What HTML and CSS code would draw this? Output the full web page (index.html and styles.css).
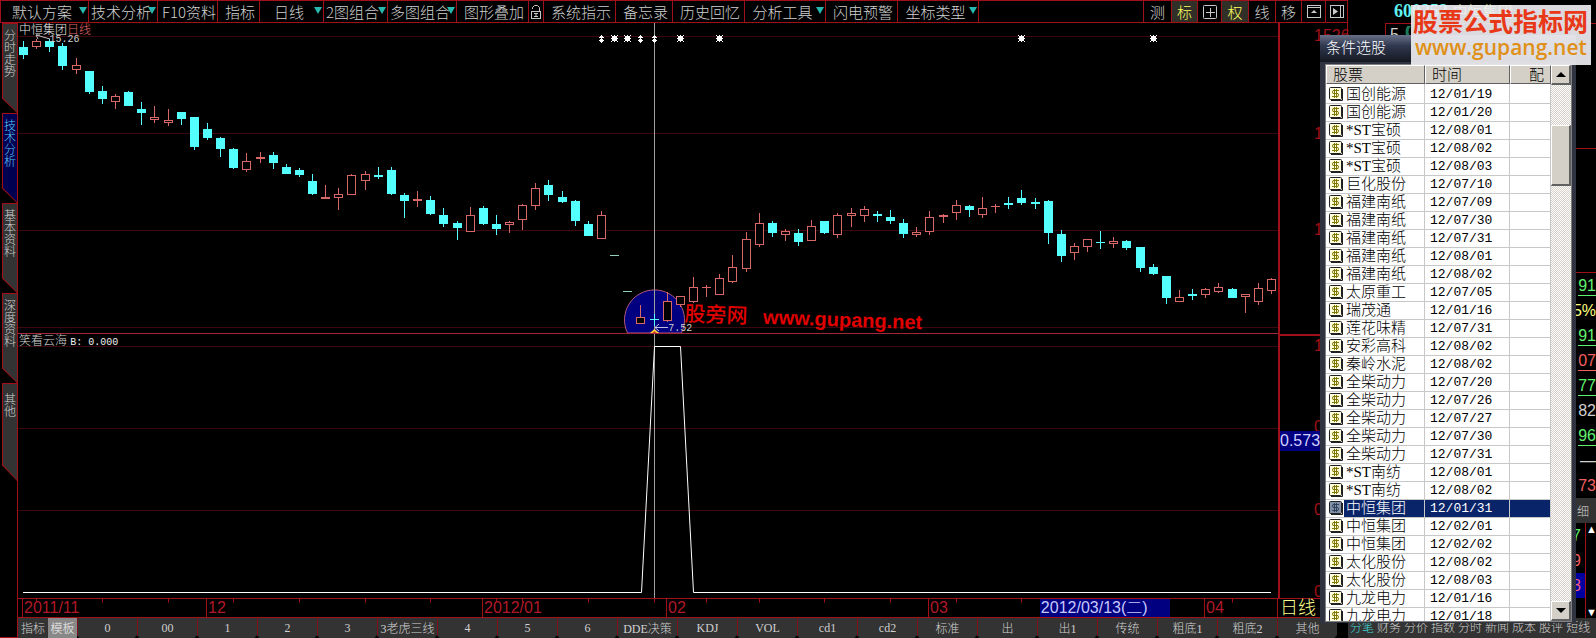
FILE: index.html
```html
<!DOCTYPE html>
<html lang="zh-CN">
<head>
    <meta charset="utf-8">
    <title>中恒集团 日线</title>
    <link rel="stylesheet" href="styles.css">
</head>
<body>
    <div class="main">
        <nav class="toolbar">
            <button class="tool drop">默认方案</button>
            <button class="tool drop tight">技术分析</button>
            <button class="tool">F10资料</button>
            <button class="tool">指标</button>
            <button class="tool drop">日线</button>
            <button class="tool drop tight">2图组合</button>
            <button class="tool drop tight">多图组合</button>
            <button class="tool">图形叠加</button>
            <button class="tool icon" aria-label="锁定">
                <svg width="12" height="16" viewBox="0 0 12 16" fill="none" stroke="#c8c8c8">
                    <path d="M2.5 5V3.5L4.5 1.5H7.5L9.5 3.5V7"/>
                    <rect x="1.5" y="7.5" width="9" height="7"/>
                    <path d="M4 9.5H8M4 12.5H8M6 9V13"/>
                </svg>
            </button>
            <button class="tool">系统指示</button>
            <button class="tool">备忘录</button>
            <button class="tool">历史回忆</button>
            <button class="tool drop">分析工具</button>
            <button class="tool">闪电预警</button>
            <button class="tool drop">坐标类型</button>
            <span class="tool"></span>
            <button class="tool icon">测</button>
            <button class="tool icon on">标</button>
            <button class="tool icon" aria-label="田字">
                <svg width="14" height="14" viewBox="0 0 14 14" fill="none" stroke="#c8c8c8">
                    <rect x="0.5" y="0.5" width="13" height="13" rx="1"/>
                    <path d="M3 7.5H12M7.5 3V12"/>
                </svg>
            </button>
            <button class="tool icon on">权</button>
            <button class="tool icon">线</button>
            <button class="tool icon">移</button>
            <button class="tool icon" aria-label="向上">
                <svg width="14" height="14" viewBox="0 0 14 14" fill="none" stroke="#c8c8c8">
                    <rect x="0.5" y="0.5" width="13" height="12"/>
                    <path d="M0 2.5H14"/>
                    <path d="M4 8L7 5L10 8Z" fill="#c8c8c8" stroke="none"/>
                </svg>
            </button>
            <button class="tool icon" aria-label="向右">
                <svg width="14" height="14" viewBox="0 0 14 14" fill="none" stroke="#c8c8c8">
                    <rect x="0.5" y="0.5" width="13" height="12"/>
                    <path d="M10.5 0V13"/>
                    <path d="M3 3L8 6.5L3 10Z" fill="#c8c8c8" stroke="none"/>
                </svg>
            </button>
        </nav>

        <div class="workspace">
            <nav class="side-tabs">
                <button class="side-tab"><span>分时走势</span></button>
                <button class="side-tab active"><span>技术分析</span></button>
                <button class="side-tab"><span>基本资料</span></button>
                <button class="side-tab"><span>深度资料</span></button>
                <button class="side-tab"><span>其他</span></button>
            </nav>

            <div class="center">
                <div class="plot-row">
                    <div class="plot">
                        <svg id="chart" viewBox="18 23 1260 575" preserveAspectRatio="none"></svg>
                        <div class="label stock-title">中恒集团<span>日线</span></div>
                        <div class="label high-price">15.26</div>
                        <div class="label low-price">7.52</div>
                        <div class="label indicator-title">笑看云海 <span>B: 0.000</span></div>
                        <div class="label site-mark"><b>股旁网</b> <span>www.gupang.net</span></div>
                    </div>
                    <div class="price-axis">
                        <span></span>
                        <span>1526</span>
                        <span>1</span>
                        <span>1</span>
                        <span>1</span>
                        <span>0</span>
                        <span>0</span>
                        <span>0</span>
                        <output class="cursor-value">0.573</output>
                    </div>
                </div>
                <div class="time-row">
                    <div class="time-axis">
                        <svg id="ticks" viewBox="18 0 1260 20" preserveAspectRatio="none"></svg>
                        <span></span>
                        <span>2011/11</span>
                        <span>12</span>
                        <span>2012/01</span>
                        <span>02</span>
                        <span>03</span>
                        <span>04</span>
                        <output class="cursor-date">2012/03/13(二)</output>
                    </div>
                    <div class="period">日线</div>
                </div>
                <nav class="bottom-tabs" id="bottom-tabs">
                    <button class="mode">指标</button>
                    <button class="mode on">模板</button>
                </nav>
            </div>
        </div>
    </div>

    <aside class="quotes">
        <div class="quote-head"><b>600252</b> <strong>中恒集团</strong></div>
        <div class="quote-top">
            <span>5</span>
            <svg width="24" height="24" viewBox="0 0 24 24" fill="none" stroke="#1a7a5a" stroke-width="3"><circle cx="12" cy="6" r="10"/></svg>
        </div>
        <div class="quote-gap"></div>
        <div class="quote-row green"><u>91</u></div>
        <div class="quote-row yellow">5%</div>
        <div class="quote-row green"><u>91</u></div>
        <div class="quote-row red"><u>07</u></div>
        <div class="quote-row green"><u>77</u></div>
        <div class="quote-row">82</div>
        <div class="quote-row green"><u>96</u></div>
        <div class="quote-row">—</div>
        <div class="quote-row red">73</div>
        <button class="detail-tab">细</button>
        <div class="deals">
            <div class="deal-list">
                <span class="green">7</span>
                <span class="red">9</span>
                <span class="picked">8</span>
            </div>
            <div class="deal-scroll">
                <button aria-label="上移">▲</button>
                <button aria-label="下移">▼</button>
            </div>
        </div>
        <nav class="quote-tabs">
            <a class="on" href="#">分笔</a>
            <a href="#">财务</a>
            <a href="#">分价</a>
            <a href="#">指数</a>
            <a href="#">分时</a>
            <a href="#">新闻</a>
            <a href="#">成本</a>
            <a href="#">股评</a>
            <a href="#">短线</a>
        </nav>
    </aside>

    <section class="dialog">
        <h2>条件选股</h2>
        <div class="dialog-body">
            <div class="table-wrap">
                <table>
                    <thead>
                        <tr><th class="col-name">股票</th><th class="col-date">时间</th><th class="col-match">配</th></tr>
                    </thead>
                    <tbody id="stocks"></tbody>
                </table>
            </div>
            <div class="scrollbar">
                <button aria-label="向上滚动"><i class="up"></i></button>
                <div class="track"><div class="thumb"></div></div>
                <button aria-label="向下滚动"><i class="down"></i></button>
            </div>
        </div>
    </section>

    <div class="site-logo">
        <strong>股票公式指标网</strong>
        <span>www.gupang.net</span>
    </div>

    <script src="chart.js"></script>
</body>
</html>
```
FILE: styles.css
```css
* {
    box-sizing: border-box;
}

body {
    margin: 0;
    height: 100vh;
    display: flex;
    position: relative;
    overflow: hidden;
    background-color: #000000;
    color: #d0d0d0;
    font-family: "Liberation Sans", "Noto Sans CJK SC", sans-serif;
    font-weight: 300;
}

button {
    margin: 0;
    padding: 0;
    border: none;
    background: none;
    color: inherit;
    font: inherit;
    white-space: nowrap;
}

/* toolbar and work area */
.main {
    flex: 1;
    min-width: 0;
    display: flex;
    flex-direction: column;
}

.toolbar {
    height: 23px;
    display: grid;
    grid-template-columns: 88px 69px 60px 42px 64px 64px 69px 72px 15px 72px 57px 72px 81px 72px 81px 1fr 28px 26px 24px 27px 27px 26px 24px 22px;
    border: 1px solid #a01018;
    border-right: none;
    font-family: "Noto Sans CJK SC", sans-serif;
    font-size: 15px;
}

.tool {
    display: flex;
    align-items: center;
    justify-content: center;
    padding-left: 3px;
    overflow: hidden;
    line-height: 21px;
    border-right: 1px solid #a01018;
}

.tool.icon {
    padding-left: 0;
}

.tool.drop {
    position: relative;
    padding-right: 8px;
}

.tool.tight {
    justify-content: flex-start;
    padding: 0 0 0 2px;
}

.tool.drop::after {
    content: "";
    position: absolute;
    top: 6px;
    right: 1px;
    border: 4px solid transparent;
    border-top: 7px solid #28b8b0;
    border-bottom: none;
}

.tool.on {
    background-color: #303028;
    color: #ffff60;
}

.workspace {
    flex: 1;
    min-height: 0;
    display: flex;
}

.side-tabs {
    width: 18px;
    padding-left: 2px;
    border-right: 1px solid #a01018;
    border-bottom: 1px solid #a01018;
}

.side-tab {
    position: relative;
    display: block;
    width: 15px;
    height: 90px;
    padding-top: 6px;
    background-color: #a01018;
    clip-path: polygon(0 0, 100% 0, 100% 100%, 0 84%);
    font-size: 12px;
    line-height: 12px;
    white-space: normal;
    vertical-align: top;
}

.side-tab::before {
    content: "";
    position: absolute;
    inset: 1px 0 1px 1px;
    background-color: #333333;
    clip-path: polygon(0 0, 100% 0, 100% 100%, 0 84%);
}

.side-tab span {
    position: relative;
    display: block;
    width: 12px;
    height: 82px;
    margin-left: 2px;
}

.side-tab.active {
    color: #58c8f8;
}

.side-tab.active::before {
    background-color: #000050;
}

.side-tab:last-child {
    height: 98px;
}

.center {
    flex: 1;
    min-width: 0;
    display: flex;
    flex-direction: column;
}

.plot-row {
    flex: 1;
    min-height: 0;
    display: flex;
}

.plot {
    flex: 1;
    min-width: 0;
    position: relative;
}

#chart,
#ticks {
    position: absolute;
    inset: 0;
    width: 100%;
    height: 100%;
}

.label {
    position: absolute;
    font-size: 12px;
    line-height: 14px;
    white-space: nowrap;
}

.stock-title {
    left: 1px;
    top: 0;
    color: #e8e8e8;
}

.stock-title span {
    color: #e06868;
}

.high-price {
    left: 2.5%;
    top: 10px;
    font-family: "Liberation Mono", monospace;
    font-size: 10px;
}

.low-price {
    left: 51.6%;
    top: 52%;
    font-family: "Liberation Mono", monospace;
    font-size: 10px;
}

.indicator-title {
    left: 1px;
    top: 54%;
}

.indicator-title span {
    color: #f0f0f0;
    font-family: "Liberation Mono", monospace;
    font-size: 10px;
}

.site-mark {
    left: 52.9%;
    top: 48.5%;
    color: #e00000;
    font-size: 20px;
    line-height: 24px;
    transform: rotate(2deg);
    transform-origin: left top;
}

.site-mark b {
    font-size: 21px;
    font-weight: 500;
    margin-right: 10px;
}

.site-mark span {
    font-weight: bold;
}

.price-axis {
    position: relative;
    width: 70px;
    display: grid;
    grid-template-rows: 3fr 98fr 96fr 116fr 81fr 83fr 82fr 16fr;
    padding-left: 34px;
    color: #a01018;
    font-size: 16px;
    line-height: 20px;
    border-left: 2px solid #a01018;
    border-right: 1px solid #a01018;
}

.price-axis span {
    min-height: 0;
}

.price-axis::before {
    content: "";
    position: absolute;
    left: 0;
    right: 0;
    top: 54%;
    height: 2px;
    background-color: #a01018;
}

.cursor-value {
    position: absolute;
    left: 0;
    top: 71%;
    width: 42px;
    background-color: #000080;
    color: #d0d0ff;
}

.time-row {
    height: 20px;
    display: flex;
    border-top: 1px solid #a01018;
    border-bottom: 1px solid #a01018;
    line-height: 18px;
}

.time-axis {
    flex: 1;
    position: relative;
    display: grid;
    grid-template-columns: 5fr 184fr 276fr 184fr 262fr 276fr 73fr;
    color: #b01828;
    font-size: 16px;
}

.time-axis span {
    padding-left: 1px;
    border-right: 1px solid #a01018;
}

.cursor-date {
    position: absolute;
    left: 81.1%;
    width: 10.3%;
    padding-left: 1px;
    background-color: #000080;
    color: #c8c8ff;
    white-space: nowrap;
    overflow: hidden;
}

.period {
    width: 70px;
    padding-left: 2px;
    color: #ffff90;
    font-size: 18px;
}

.bottom-tabs {
    height: 20px;
    display: flex;
    font-family: "Liberation Serif", "Noto Sans CJK SC", serif;
    font-size: 12px;
    background-color: #000000;
}

.bottom-tabs button {
    flex: 0 1 60px;
    background-color: #333333;
    border-left: 1px solid #801018;
    clip-path: polygon(0 0, 100% 0, 100% 85%, 96% 100%, 4% 100%, 0 85%);
}

.bottom-tabs .mode {
    flex: 0 0 30px;
    border: none;
    clip-path: none;
}

.bottom-tabs .mode.on {
    flex-basis: 29px;
    background-color: #888888;
    color: #f0f0f0;
}

/* quote panel */
.quotes {
    width: 248px;
    display: flex;
    flex-direction: column;
    overflow: hidden;
    text-align: right;
    font-size: 16px;
}

.quote-head {
    height: 23px;
    padding-left: 46px;
    text-align: left;
    white-space: nowrap;
    font-family: "Liberation Serif", "Noto Sans CJK SC", serif;
    font-size: 18px;
    line-height: 23px;
    color: #60f0f0;
}

.quote-head b {
    font-weight: bold;
}

.quote-head strong {
    color: #e8e880;
    font-size: 15px;
    font-weight: 400;
}

.quote-top {
    height: 126px;
    margin-left: 37px;
    padding: 2px 4px;
    display: flex;
    gap: 6px;
    border: 1px solid #a01018;
    border-right: none;
}

.quote-gap {
    height: 124px;
    border-bottom: 1px solid #a01018;
}

.quote-row {
    height: 25px;
    line-height: 26px;
}

.quote-row u {
    display: inline-block;
    height: 23px;
    text-decoration: none;
    border-bottom: 1px solid;
}

.green {
    color: #60f070;
}

.yellow {
    color: #ffff80;
}

.red {
    color: #f06060;
}

.detail-tab {
    height: 25px;
    padding-right: 7px;
    background-color: #333333;
    font-size: 12px;
    text-align: right;
}

.deals {
    flex: 1;
    display: flex;
    min-height: 0;
}

.deal-list {
    flex: 1;
    display: flex;
    flex-direction: column;
    line-height: 25px;
    border-right: 1px solid #a01018;
}

.deal-list span {
    padding-right: 4px;
}

.picked {
    background-color: #0000a0;
    color: #f06080;
}

.deal-scroll {
    width: 10px;
    display: flex;
    flex-direction: column;
    justify-content: space-between;
    color: #ffffff;
    font-size: 11px;
    line-height: 12px;
}

.quote-tabs {
    height: 20px;
    display: flex;
    padding-left: 2px;
    gap: 3px;
    background-color: #333333;
    font-size: 12px;
    line-height: 20px;
}

.quote-tabs a {
    color: #d0d0d0;
    text-decoration: none;
    white-space: nowrap;
}

.quote-tabs .on {
    color: #40d8d8;
}

/* stock picker window */
.dialog {
    position: absolute;
    top: 35px;
    right: 20px;
    bottom: 15px;
    width: 256px;
    display: flex;
    flex-direction: column;
    padding: 0 4px 1px 5px;
    background-color: #303440;
}

.dialog h2 {
    height: 27px;
    margin: 0 -4px 2px -5px;
    padding-left: 6px;
    background-image: linear-gradient(#687088, #303850 40%, #141820);
    color: #ffffff;
    font-size: 15px;
    font-weight: 300;
    line-height: 26px;
}

.dialog-body {
    flex: 1;
    min-height: 0;
    display: flex;
    border: 1px solid #808080;
    background-color: #ffffff;
    color: #000000;
}

.table-wrap {
    flex: 1;
    overflow: hidden;
}

.dialog table {
    width: 100%;
    table-layout: fixed;
    border-collapse: separate;
    border-spacing: 0;
    font-size: 15px;
}

.dialog th {
    height: 19px;
    padding: 0 6px;
    background-color: #d4d0c8;
    border: 1px solid #ffffff;
    border-right-color: #606060;
    border-bottom-color: #606060;
    font-weight: 300;
    line-height: 17px;
    text-align: left;
}

.col-name {
    width: 99px;
}

.col-date {
    width: 85px;
}

.dialog .col-match {
    text-align: right;
}

.dialog td {
    height: 18px;
    padding: 0 5px;
    border-right: 1px solid #c8c8c8;
    border-bottom: 1px solid #c8c8c8;
    font-family: "Liberation Mono", "Noto Sans CJK SC", monospace;
    font-size: 13px;
    line-height: 17px;
    white-space: nowrap;
}

.dialog tbody tr:first-child td {
    height: 20px;
    padding-top: 2px;
}

.dialog .stock {
    display: flex;
    padding: 0;
    font-family: "Liberation Serif", "Noto Sans CJK SC", serif;
    font-size: 15px;
}

.stock svg {
    flex: none;
    margin: 1px 1px 0 3px;
}

.stock span {
    flex: 1;
    height: 17px;
    padding-left: 2px;
}

.selected .stock span,
.selected td:not(.stock) {
    background-color: #0a246a;
    color: #ffffff;
}

.scrollbar {
    width: 20px;
    display: flex;
    flex-direction: column;
}

.scrollbar button,
.thumb {
    background-color: #d4d0c8;
    border: 1px solid #ffffff;
    border-right: 2px solid #606060;
    border-bottom: 2px solid #606060;
}

.scrollbar button {
    height: 20px;
    display: flex;
    align-items: center;
    justify-content: center;
}

.scrollbar i {
    border: 5px solid transparent;
}

.scrollbar .up {
    border-top: none;
    border-bottom-color: #000000;
}

.scrollbar .down {
    border-bottom: none;
    border-top-color: #000000;
}

.track {
    flex: 1;
    padding-top: 40px;
    background: repeating-conic-gradient(#d4d0c8 0 25%, #ffffff 0 50%) 0 0 / 2px 2px;
}

.thumb {
    height: 61px;
}

.site-logo {
    position: absolute;
    top: 5px;
    right: 5px;
    width: 180px;
    height: 60px;
    padding: 2px 0 0 2px;
    background-color: rgba(236, 236, 240, 0.93);
    white-space: nowrap;
}

.site-logo strong {
    display: block;
    color: #e83818;
    font-size: 25px;
    font-weight: bold;
    line-height: 30px;
}

.site-logo span {
    display: block;
    padding-left: 2px;
    color: #e09018;
    font-family: "Open Sans", sans-serif;
    font-size: 21px;
    font-weight: 600;
    line-height: 20px;
}
```
FILE: chart.js
```javascript
// one candle per day: high, body top, body bottom, low, kind
// u = hollow (up), d = filled (down)
var candles = [
    [41, 47, 55, 59, 'd'], [39, 41, 47, 49, 'u'], [39, 41, 47, 52, 'd'], [43, 46, 66, 70, 'd'],
    [58, 65, 70, 74, 'u'], [71, 71, 92, 94, 'd'], [86, 91, 99, 104, 'd'], [94, 96, 102, 109, 'u'],
    [91, 92, 106, 106, 'd'], [102, 109, 113, 125, 'd'], [106, 117, 120, 123, 'u'], [109, 120, 123, 126, 'u'],
    [112, 112, 119, 125, 'd'], [117, 117, 147, 150, 'd'], [123, 129, 138, 140, 'd'], [137, 138, 149, 157, 'd'],
    [148, 149, 168, 169, 'd'], [153, 161, 170, 172, 'u'], [152, 157, 159, 163, 'u'], [152, 155, 163, 169, 'd'],
    [164, 167, 174, 174, 'd'], [168, 170, 175, 177, 'd'], [174, 181, 194, 195, 'd'], [185, 197, 199, 199, 'u'],
    [188, 194, 198, 210, 'u'], [174, 175, 195, 195, 'u'], [171, 174, 181, 190, 'u'], [167, 175, 177, 179, 'd'],
    [167, 170, 194, 195, 'd'], [193, 195, 201, 218, 'd'], [191, 199, 201, 207, 'u'], [196, 200, 214, 215, 'd'],
    [208, 215, 224, 227, 'd'], [221, 223, 228, 240, 'd'], [207, 215, 232, 232, 'u'], [206, 208, 224, 225, 'd'],
    [215, 224, 229, 235, 'd'], [221, 222, 225, 233, 'u'], [204, 205, 220, 230, 'u'], [183, 188, 206, 210, 'u'],
    [180, 185, 195, 201, 'd'], [191, 197, 202, 203, 'd'], [200, 201, 221, 226, 'd'], [221, 224, 236, 236, 'd'],
    [211, 215, 239, 239, 'u'], [255, 255, 256, 256, 'n'], [291, 291, 292, 292, 'n'], [305, 317, 324, 324, 'u'],
    [314, 319, 320, 326, 'd'], [292, 301, 321, 322, 'u'], [296, 296, 305, 307, 'u'], [277, 287, 302, 303, 'u'],
    [285, 287, 288, 297, 'u'], [274, 278, 295, 295, 'u'], [255, 267, 282, 283, 'u'], [232, 239, 269, 272, 'u'],
    [213, 223, 245, 247, 'u'], [221, 223, 233, 237, 'd'], [229, 231, 235, 241, 'u'], [229, 233, 242, 246, 'd'],
    [220, 226, 241, 241, 'u'], [221, 221, 233, 234, 'd'], [213, 215, 235, 238, 'u'], [208, 213, 216, 227, 'u'],
    [206, 209, 216, 222, 'u'], [211, 214, 216, 222, 'd'], [210, 217, 221, 224, 'd'], [219, 223, 234, 238, 'd'],
    [227, 232, 235, 237, 'u'], [211, 217, 232, 235, 'u'], [214, 215, 217, 223, 'u'], [200, 205, 213, 220, 'u'],
    [205, 206, 210, 217, 'd'], [197, 208, 215, 218, 'u'], [204, 206, 207, 213, 'u'], [197, 203, 205, 209, 'd'],
    [190, 198, 203, 205, 'd'], [198, 202, 204, 209, 'd'], [200, 201, 233, 244, 'd'], [230, 234, 256, 262, 'd'],
    [243, 246, 253, 260, 'u'], [239, 239, 247, 252, 'u'], [231, 242, 243, 249, 'd'], [237, 241, 244, 248, 'u'],
    [240, 241, 248, 250, 'd'], [247, 247, 268, 272, 'd'], [264, 267, 274, 275, 'd'], [276, 276, 298, 304, 'd'],
    [290, 297, 302, 302, 'u'], [289, 294, 296, 300, 'd'], [288, 289, 295, 298, 'u'], [283, 287, 292, 293, 'u'],
    [288, 289, 298, 298, 'd'], [294, 294, 297, 313, 'u'], [283, 288, 302, 305, 'u'], [278, 279, 291, 294, 'u']
];

var stars = [614, 627, 680, 719, 1021, 1153];
var dots = [601, 640, 654];
var UP = '#d86868';
var DOWN = '#54ffff';

function rect(x, y, w, h, fill) {
    return '<rect x="' + x + '" y="' + y + '" width="' + w + '" height="' + h + '" fill="' + fill + '"/>';
}

function drawCandle(c, i) {
    var x = 23 + Math.floor(i * 13.136 + 0.56);
    var color = c[4] === 'u' ? UP : c[4] === 'd' ? DOWN : '#90d0b8';
    var body = c[2] - c[1];
    var out = rect(x, c[0], 1, c[1] - c[0], color) + rect(x, c[2], 1, c[3] - c[2], color);
    if (c[4] === 'u' && body > 2) {
        out += '<rect x="' + (x - 3.5) + '" y="' + (c[1] + 0.5) + '" width="8" height="' + (body - 1) +
            '" fill="#000000" stroke="' + UP + '"/>';
    } else {
        out += rect(x - 4, c[1], 9, body, color);
    }
    return out;
}

function drawChart() {
    var out = '';
    [36, 133, 230, 327, 346, 428, 510].forEach(function (y) {
        out += rect(18, y, 1260, 1, '#3c0810');
    });
    out += '<path d="M627.5 333A30 30 0 1 1 681.5 333Z" fill="#000080" stroke="#b05878"/>';
    out += rect(654, 23, 1, 575, '#a0a0a0');
    out += candles.map(drawCandle).join('');
    out += rect(18, 333, 1260, 1, '#a02838');
    out += '<path d="M23 592.5H641.5L654.5 346.5H680.5L693.5 592.5H1271" fill="none" stroke="#ffffff"/>';

    // event marks along the top
    stars.forEach(function (x) {
        out += rect(x - 2, 36, 5, 5, '#ffffff');
        out += '<path d="M' + (x - 3) + ' 35L' + (x + 4) + ' 42M' + (x + 4) + ' 35L' + (x - 3) +
            ' 42M' + (x + 0.5) + ' 35V42M' + (x - 3) + ' 38.5H' + (x + 4) + '" stroke="#ffffff"/>';
    });
    dots.forEach(function (x) {
        out += rect(x, 35, 1, 8, '#ffffff') + rect(x - 1, 36, 3, 2, '#ffffff') + rect(x - 2, 37, 5, 1, '#ffffff') +
            rect(x - 1, 39, 3, 3, '#ffffff') + rect(x - 2, 40, 5, 1, '#ffffff');
    });

    // pointers of the highest and lowest price
    out += '<path d="M36 35L50 39M36 35H40M36 35L38 39" fill="none" stroke="#c0c0c0"/>';
    out += '<path d="M655 327.5H668M655 327.5L659 324M655 327.5L659 331" fill="none" stroke="#c0c0e0"/>';
    out += '<path d="M650 333L654.5 329L659 333Z" fill="#ffe040"/><path d="M652 333L654.5 331L657 333Z" fill="#e04020"/>';
    document.getElementById('chart').innerHTML = out;

    document.getElementById('ticks').innerHTML =
        [36, 102, 168, 233, 299, 365, 430, 496, 522, 588, 654, 706, 759, 824, 890, 956, 1021, 1232].map(function (x) {
            return rect(x, 0, 1, 4, '#a01018');
        }).join('');
}

var tabs = ['0', '00', '1', '2', '3', '3老虎三线', '4', '5', '6', 'DDE决策', 'KDJ', 'VOL', 'cd1', 'cd2',
    '标准', '出', '出1', '传统', '粗底1', '粗底2', '其他'];

function fillTabs() {
    var bar = document.getElementById('bottom-tabs');
    tabs.forEach(function (name) {
        var button = document.createElement('button');
        button.textContent = name;
        bar.appendChild(button);
    });
}

var stocks = [
    ['国创能源', '12/01/19'], ['国创能源', '12/01/20'],
    ['*ST宝硕', '12/08/01'], ['*ST宝硕', '12/08/02'], ['*ST宝硕', '12/08/03'],
    ['巨化股份', '12/07/10'],
    ['福建南纸', '12/07/09'], ['福建南纸', '12/07/30'], ['福建南纸', '12/07/31'], ['福建南纸', '12/08/01'], ['福建南纸', '12/08/02'],
    ['太原重工', '12/07/05'], ['瑞茂通', '12/01/16'], ['莲花味精', '12/07/31'], ['安彩高科', '12/08/02'], ['秦岭水泥', '12/08/02'],
    ['全柴动力', '12/07/20'], ['全柴动力', '12/07/26'], ['全柴动力', '12/07/27'], ['全柴动力', '12/07/30'], ['全柴动力', '12/07/31'],
    ['*ST南纺', '12/08/01'], ['*ST南纺', '12/08/02'],
    ['中恒集团', '12/01/31'], ['中恒集团', '12/02/01'], ['中恒集团', '12/02/02'],
    ['太化股份', '12/08/02'], ['太化股份', '12/08/03'],
    ['九龙电力', '12/01/16'], ['九龙电力', '12/01/18']
];
var selected = 23;

function coinIcon(on) {
    return '<svg width="14" height="14" viewBox="0 0 14 14" fill="none">' +
        '<rect x="0.5" y="0.5" width="12" height="12" rx="1" fill="' + (on ? '#8090a8' : '#ffffe0') + '" stroke="#202020"/>' +
        '<path d="M13.5 2V13.5H2" stroke="#202020"/>' +
        '<path d="M10 3.5H4L3.5 5L4 6.5H9L9.5 8L9 9.5H3M5.5 2V11M7.5 2V11" stroke="' + (on ? '#304058' : '#807800') + '"/></svg>';
}

function fillStocks() {
    document.getElementById('stocks').innerHTML = stocks.map(function (s, i) {
        return '<tr' + (i === selected ? ' class="selected"' : '') + '><td class="stock">' + coinIcon(i === selected) +
            '<span>' + s[0] + '</span></td><td>' + s[1] + '</td><td></td></tr>';
    }).join('');
}

drawChart();
fillTabs();
fillStocks();
```
